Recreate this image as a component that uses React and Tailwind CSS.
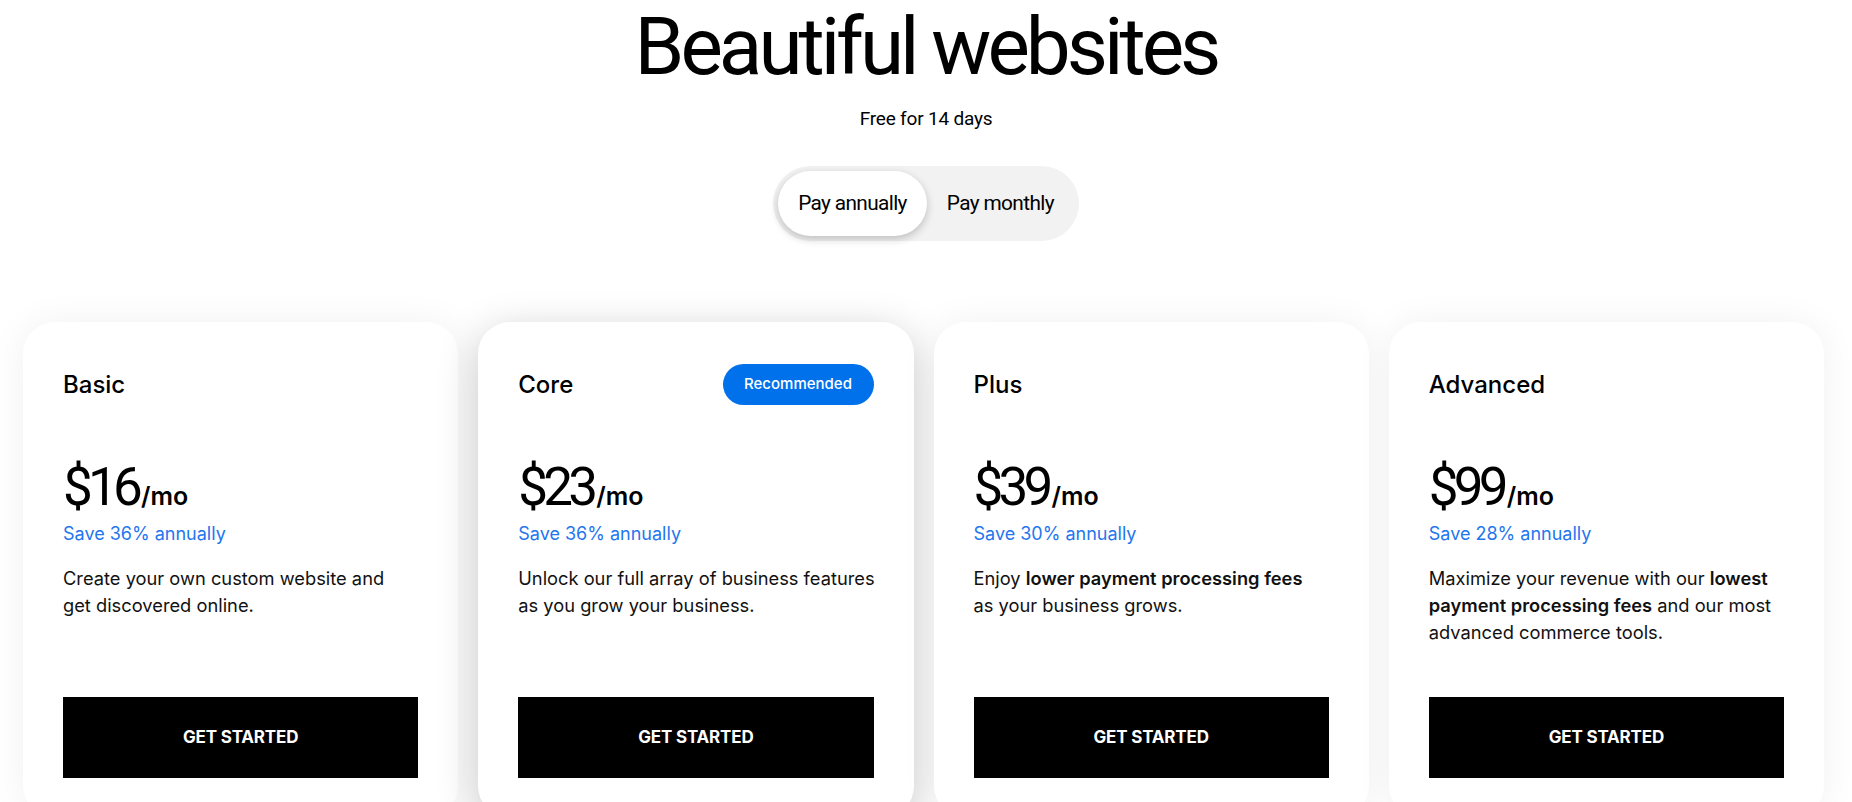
import React, { useState } from 'react';

const plans = [
  {
    name: 'Basic',
    price: '$16',
    save: 'Save 36% annually',
    desc: (
      <>
        Create your own custom website and
        <br />
        get discovered online.
      </>
    ),
  },
  {
    name: 'Core',
    price: '$23',
    save: 'Save 36% annually',
    recommended: true,
    desc: (
      <>
        Unlock our full array of business features
        <br />
        as you grow your business.
      </>
    ),
  },
  {
    name: 'Plus',
    price: '$39',
    save: 'Save 30% annually',
    desc: (
      <>
        Enjoy <span className="font-semibold">lower payment processing fees</span>
        <br />
        as your business grows.
      </>
    ),
  },
  {
    name: 'Advanced',
    price: '$99',
    save: 'Save 28% annually',
    desc: (
      <>
        Maximize your revenue with our <span className="font-semibold">lowest</span>
        <br />
        <span className="font-semibold">payment processing fees</span> and our most
        <br />
        advanced commerce tools.
      </>
    ),
  },
];

const PlanCard = ({ plan }) => {
  return (
    <div
      className={
        plan.recommended
          ? 'rounded-[32px] bg-white px-10 pt-[42px] pb-10 shadow-[0_10px_40px_rgba(0,0,0,0.22)]'
          : 'rounded-[32px] bg-white px-10 pt-[42px] pb-10 shadow-[0_0_36px_rgba(0,0,0,0.06)]'
      }
    >
      <div className="flex h-[41px] items-center justify-between">
        <h3 className="text-[24px] font-medium text-black">{plan.name}</h3>
        {plan.recommended && (
          <span className="flex h-[41px] w-[151px] items-center justify-center rounded-full bg-[#0071eb] text-[15px] font-medium text-white">
            Recommended
          </span>
        )}
      </div>

      <div className="mt-[56px] flex items-baseline">
        <span className="font-['Roboto',sans-serif] text-[53px] leading-none tracking-[-0.09em] text-black">
          {plan.price}
        </span>
        <span className="ml-[3px] text-[25px] font-semibold leading-none text-black">/mo</span>
      </div>

      <p className="mt-[8px] text-[18px] leading-[24px] text-[#1f76ee]">{plan.save}</p>

      <p className="mt-[19px] h-[81px] whitespace-nowrap text-[18.3px] leading-[27px] text-[#111]">
        {plan.desc}
      </p>

      <button className="mt-[51px] flex h-[81px] w-full items-center justify-center bg-black text-[17px] font-bold tracking-[-0.01em] text-white">
        GET STARTED
      </button>
    </div>
  );
};

export default function App() {
  const [billing, setBilling] = useState('annually');

  return (
    <div className="min-h-screen bg-white font-['Inter',sans-serif] text-black">
      <div className="flex flex-col items-center pt-[7px]">
        <h1 className="font-['Roboto',sans-serif] text-[80px] font-normal leading-none tracking-[-0.05em]">
          Beautiful websites
        </h1>
        <p className="mt-[20px] font-['Roboto',sans-serif] text-[19px] leading-[24px] tracking-[-0.01em]">
          Free for 14 days
        </p>

        <div className="mt-[35px] flex rounded-full bg-[#f2f2f2] p-[5px] font-['Roboto',sans-serif] text-[20.8px] tracking-[-0.03em]">
          <button
            onClick={() => setBilling('annually')}
            className={
              billing === 'annually'
                ? 'h-[65px] rounded-full bg-white px-[20px] pt-[1px] shadow-[0_3px_8px_rgba(0,0,0,0.22)]'
                : 'h-[65px] rounded-full px-[20px] pt-[1px]'
            }
          >
            Pay annually
          </button>
          <button
            onClick={() => setBilling('monthly')}
            className={
              billing === 'monthly'
                ? 'h-[65px] rounded-full bg-white px-[20px] pt-[1px] shadow-[0_3px_8px_rgba(0,0,0,0.22)]'
                : 'h-[65px] rounded-full px-[20px] pt-[1px]'
            }
          >
            Pay monthly
          </button>
        </div>
      </div>

      <div className="mt-[81px] grid grid-cols-4 gap-[20px] pl-[23px] pr-[28px]">
        {plans.map((plan) => (
          <PlanCard key={plan.name} plan={plan} />
        ))}
      </div>
    </div>
  );
}
